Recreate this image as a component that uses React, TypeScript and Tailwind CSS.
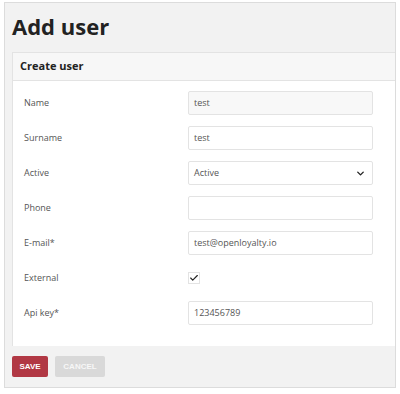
import { ChevronDown, Check } from 'lucide-react';

const Field = ({ label, children }: { label: string; children: React.ReactNode }) => (
   <div className="flex h-[24px] items-center">
      <div className="w-[164px] text-[9px] text-[#555]">{label}</div>
      <div className="w-[185px]">{children}</div>
   </div>
);

const Input = ({ value, muted }: { value?: string; muted?: boolean }) => (
   <div
      className={`flex h-[24px] items-center rounded-[2px] border border-[#e3e3e3] px-[5px] text-[9px] text-[#555] ${
         muted ? 'bg-[#f8f8f8]' : 'bg-white'
      }`}
   >
      {value}
   </div>
);

export default function App() {
   return (
      <div className="h-[394px] w-[400px] bg-white pl-[4px] pt-[2px]" style={{ fontFamily: '"Open Sans", sans-serif' }}>
         <div className="flex h-[386px] w-[392px] flex-col border border-[#dcdcdc] bg-[#f2f2f2]">
            <h1 className="ml-[7px] mt-[8px] h-[41px] text-[22px] font-bold leading-[30px] text-[#222]">Add user</h1>
            <div className="ml-[7px] flex-1 border-l border-t border-[#e3e3e3] bg-white">
               <div className="flex h-[28px] items-center border-b border-[#e3e3e3] bg-[#f7f7f7] px-[7px] text-[11px] font-bold text-[#222]">
                  Create user
               </div>
               <div className="flex flex-col gap-[11px] px-[11px] pt-[10px] pb-[20px]">
                  <Field label="Name">
                     <Input value="test" muted />
                  </Field>
                  <Field label="Surname">
                     <Input value="test" />
                  </Field>
                  <Field label="Active">
                     <div className="flex h-[24px] items-center justify-between rounded-[2px] border border-[#e3e3e3] bg-white pl-[5px] pr-[6px] text-[9px] text-[#555]">
                        Active
                        <ChevronDown size={11} strokeWidth={3} className="text-[#222]" />
                     </div>
                  </Field>
                  <Field label="Phone">
                     <Input />
                  </Field>
                  <Field label="E-mail*">
                     <Input value="test@openloyalty.io" />
                  </Field>
                  <Field label="External">
                     <div className="flex h-[12px] w-[12px] items-center justify-center border border-[#e3e3e3] bg-white">
                        <Check size={10} strokeWidth={2.75} className="text-[#222]" />
                     </div>
                  </Field>
                  <Field label="Api key*">
                     <Input value="123456789" />
                  </Field>
               </div>
            </div>
            <div className="flex h-[41px] items-center gap-[7px] pl-[7px]">
               <button className="h-[21px] w-[36px] rounded-[2px] bg-[#b13844] text-[8px] font-bold text-white" style={{ fontFamily: '"Liberation Sans", sans-serif' }}>
                  SAVE
               </button>
               <button className="h-[21px] w-[50px] rounded-[2px] bg-[#d9d9d9] text-[8px] font-bold text-[#f7f7f7]" style={{ fontFamily: '"Liberation Sans", sans-serif' }}>
                  CANCEL
               </button>
            </div>
         </div>
      </div>
   );
}
